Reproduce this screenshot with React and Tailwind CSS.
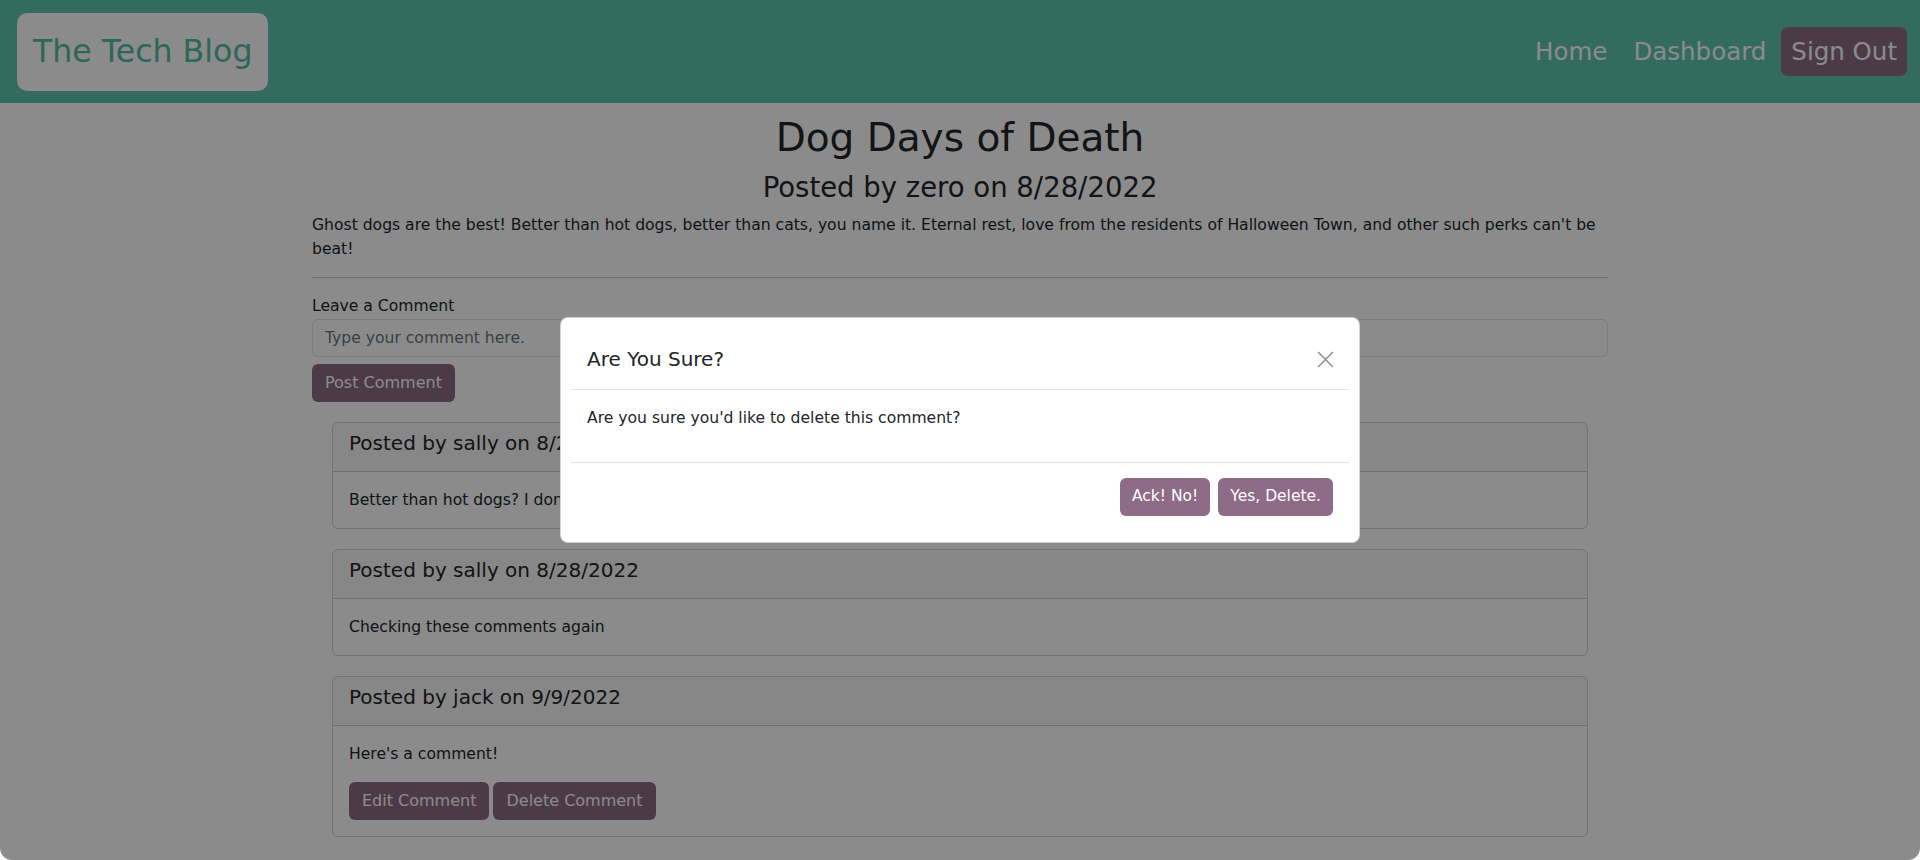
// App.jsx
const comments = [
  { author: 'sally', date: '8/28/2022', text: "Better than hot dogs? I don't know about that..." },
  { author: 'sally', date: '8/28/2022', text: 'Checking these comments again' },
  { author: 'jack', date: '9/9/2022', text: "Here's a comment!", own: true },
];

const CommentCard = ({ comment }) => (
  <div className="border border-black/[0.175] rounded-[6px] overflow-hidden">
    <div className="bg-black/[0.03] border-b border-black/[0.175] px-4 pt-2 pb-4">
      <h5 className="text-[20px] leading-6">
        Posted by {comment.author} on {comment.date}
      </h5>
    </div>
    <div className="p-4">
      <p className={comment.own ? 'leading-6 mb-4' : 'leading-6'}>{comment.text}</p>
      {comment.own && (
        <div className="flex gap-1 text-[16px]">
          <button className="h-[38px] px-[13px] rounded-[6px] bg-[#8e6b86] text-white">
            Edit Comment
          </button>
          <button className="h-[38px] px-[13px] rounded-[6px] bg-[#8e6b86] text-white">
            Delete Comment
          </button>
        </div>
      )}
    </div>
  </div>
);

const App = () => {
  return (
    <div className="w-full h-[860px] bg-white font-['DejaVu_Sans',sans-serif] text-[15.6px] text-[#212529]">
      <div className="relative h-full overflow-hidden rounded-b-[12px] bg-white">
        {/* Navbar */}
        <nav className="h-[103px] bg-[#5ec4b0] flex items-center justify-between pl-[17px] pr-[13px]">
          <a className="h-[78px] px-4 rounded-[10px] bg-white flex items-center text-[31.6px] text-[#52bea2]">
            The Tech Blog
          </a>
          <div className="flex items-center text-[24.5px] text-white">
            <a className="h-[49px] px-[13px] pt-[2px] flex items-center">Home</a>
            <a className="h-[49px] px-[13px] pt-[2px] flex items-center">Dashboard</a>
            <a className="ml-[2px] h-[49px] px-[10px] pt-[2px] flex items-center rounded-[7px] bg-[#8e6b86]">
              Sign Out
            </a>
          </div>
        </nav>

        {/* Post */}
        <main className="w-[1296px] mx-auto">
          <h1 className="mt-[11px] mb-2 text-[39px] leading-[48px] text-center">
            Dog Days of Death
          </h1>
          <h3 className="mb-[9px] text-[27.5px] leading-[34px] text-center">
            Posted by zero on 8/28/2022
          </h3>
          <p className="leading-6 mb-4">
            Ghost dogs are the best! Better than hot dogs, better than cats, you name it. Eternal
            rest, love from the residents of Halloween Town, and other such perks can't be beat!
          </p>
          <hr className="border-t border-[#c8c9ca] mb-4" />

          <label className="block leading-6">Leave a Comment</label>
          <input
            className="mt-[1px] w-full h-[38px] px-3 border border-[#dee2e6] rounded-[6px] bg-white placeholder:text-[#6c757d] outline-none"
            placeholder="Type your comment here."
          />
          <button className="mt-[7px] h-[38px] px-[13px] rounded-[6px] bg-[#8e6b86] text-white text-[16px]">
            Post Comment
          </button>

          <div className="mt-[20px] px-5 flex flex-col gap-[20px]">
            {comments.map((c, i) => (
              <CommentCard key={i} comment={c} />
            ))}
          </div>
        </main>

        {/* Modal */}
        <div className="absolute inset-0 bg-black/[0.455] flex items-center justify-center">
          <div className="w-[800px] bg-white border border-black/[0.175] rounded-[8px] p-[10px]">
            <div className="flex items-center justify-between px-4 pt-4 pb-[15px] border-b border-[#dee2e6]">
              <h5 className="text-[20px] leading-[30px]">Are You Sure?</h5>
              <button className="w-6 h-6 flex items-center justify-center mr-[-4px] text-[#8a8a8a]">
                <svg width="17" height="17" viewBox="0 0 16 16" fill="none" stroke="currentColor" strokeWidth="1.3">
                  <path d="M1 1l14 14M15 1L1 15" />
                </svg>
              </button>
            </div>
            <div className="p-4">
              <p className="leading-6 mb-4">Are you sure you'd like to delete this comment?</p>
            </div>
            <div className="flex justify-end gap-2 px-4 pt-[15px] pb-4 border-t border-[#dee2e6] text-[15.5px]">
              <button className="h-[38px] px-3 rounded-[6px] bg-[#8e6b86] text-white">Ack! No!</button>
              <button className="h-[38px] px-3 rounded-[6px] bg-[#8e6b86] text-white">Yes, Delete.</button>
            </div>
          </div>
        </div>
      </div>
    </div>
  );
};

export default App;
